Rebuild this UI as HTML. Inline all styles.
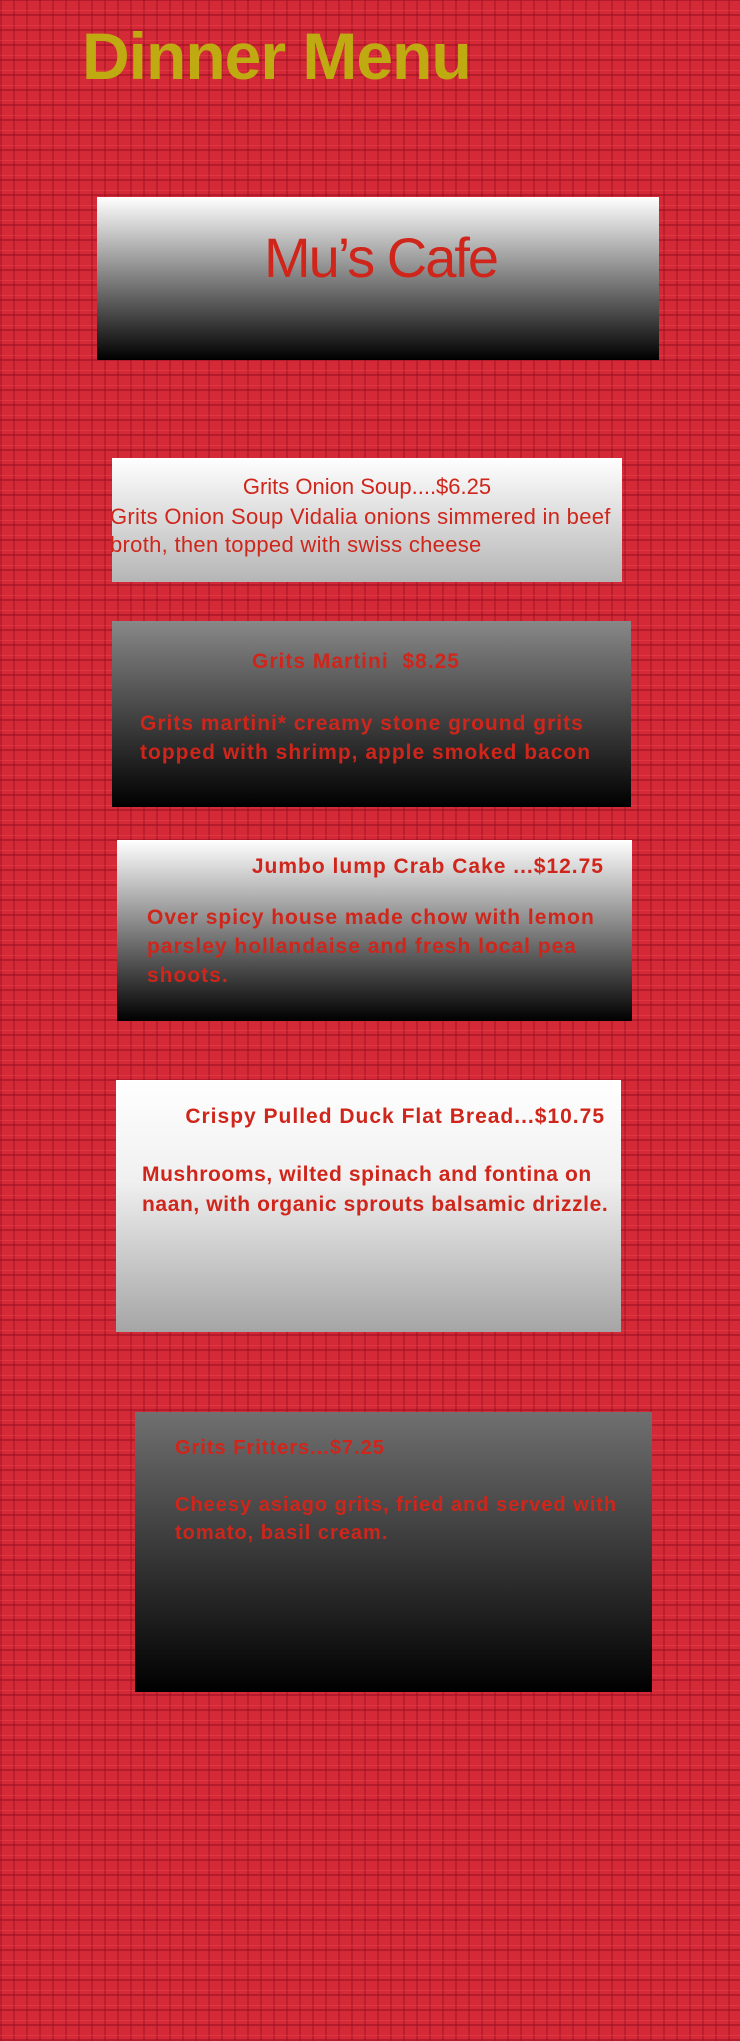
<!DOCTYPE html>
<html><head><meta charset="utf-8"><style>
html,body{margin:0;padding:0}
body{width:740px;height:2041px;position:relative;overflow:hidden;
background-color:#d42a38;
background-image:
repeating-linear-gradient(0deg, rgba(150,15,30,.5) 0 2px, transparent 2px 5px, rgba(255,80,90,.3) 5px 6px, transparent 6px 15px),
repeating-linear-gradient(90deg, rgba(150,15,30,.4) 0 2px, transparent 2px 13px);
font-family:"Liberation Sans",sans-serif}
.box{position:absolute}
.t{position:absolute;color:#d0251a;font-weight:bold;white-space:nowrap}
.d{letter-spacing:1px;font-size:21px}
.g1{background:linear-gradient(#fff,#000)}
.g2{background:linear-gradient(#fff,#b5b5b5)}
.g3{background:linear-gradient(#888,#000)}
.g4{background:linear-gradient(#fff,#f0f0f0 40%,#a5a5a5)}
.g5{background:linear-gradient(#707070,#000)}
</style></head><body>
<div class="t" style="left:82px;top:18px;font-size:66px;color:#bfaa12;letter-spacing:-1px;font-weight:bold">Dinner Menu</div>

<div class="box g1" style="left:97px;top:197px;width:562px;height:163px"></div>
<div class="t" style="left:264px;top:225px;font-size:56px;font-weight:normal;letter-spacing:-2px">Mu’s Cafe</div>

<div class="box g2" style="left:112px;top:458px;width:510px;height:124px"></div>
<div class="t" style="left:112px;width:510px;text-align:center;top:474px;font-size:22px;font-weight:normal">Grits Onion Soup....$6.25</div>
<div class="t" style="left:110px;top:503px;font-size:22px;font-weight:normal;line-height:28px;letter-spacing:0.3px">Grits Onion Soup Vidalia onions simmered in beef<br>broth, then topped with swiss cheese</div>

<div class="box g3" style="left:112px;top:621px;width:519px;height:186px"></div>
<div class="t d" style="left:252px;top:650px">Grits Martini &nbsp;$8.25</div>
<div class="t d" style="left:140px;top:709px;line-height:29px">Grits martini* creamy stone ground grits<br>topped with shrimp, apple smoked bacon</div>

<div class="box g1" style="left:117px;top:840px;width:515px;height:181px"></div>
<div class="t d" style="right:136px;top:855px">Jumbo lump Crab Cake ...$12.75</div>
<div class="t d" style="left:147px;top:903px;line-height:29px">Over spicy house made chow with lemon<br>parsley hollandaise and fresh local pea<br>shoots.</div>

<div class="box g4" style="left:116px;top:1080px;width:505px;height:252px"></div>
<div class="t d" style="right:135px;top:1105px">Crispy Pulled Duck Flat Bread...$10.75</div>
<div class="t d" style="left:142px;top:1160px;line-height:30px;letter-spacing:0.6px">Mushrooms, wilted spinach and fontina on<br>naan, with organic sprouts balsamic drizzle.</div>

<div class="box g5" style="left:135px;top:1412px;width:517px;height:280px"></div>
<div class="t d" style="left:175px;top:1437px;font-size:20px">Grits Fritters...$7.25</div>
<div class="t d" style="left:175px;top:1491px;font-size:20px;line-height:28px">Cheesy asiago grits, fried and served with<br>tomato, basil cream.</div>
</body></html>
